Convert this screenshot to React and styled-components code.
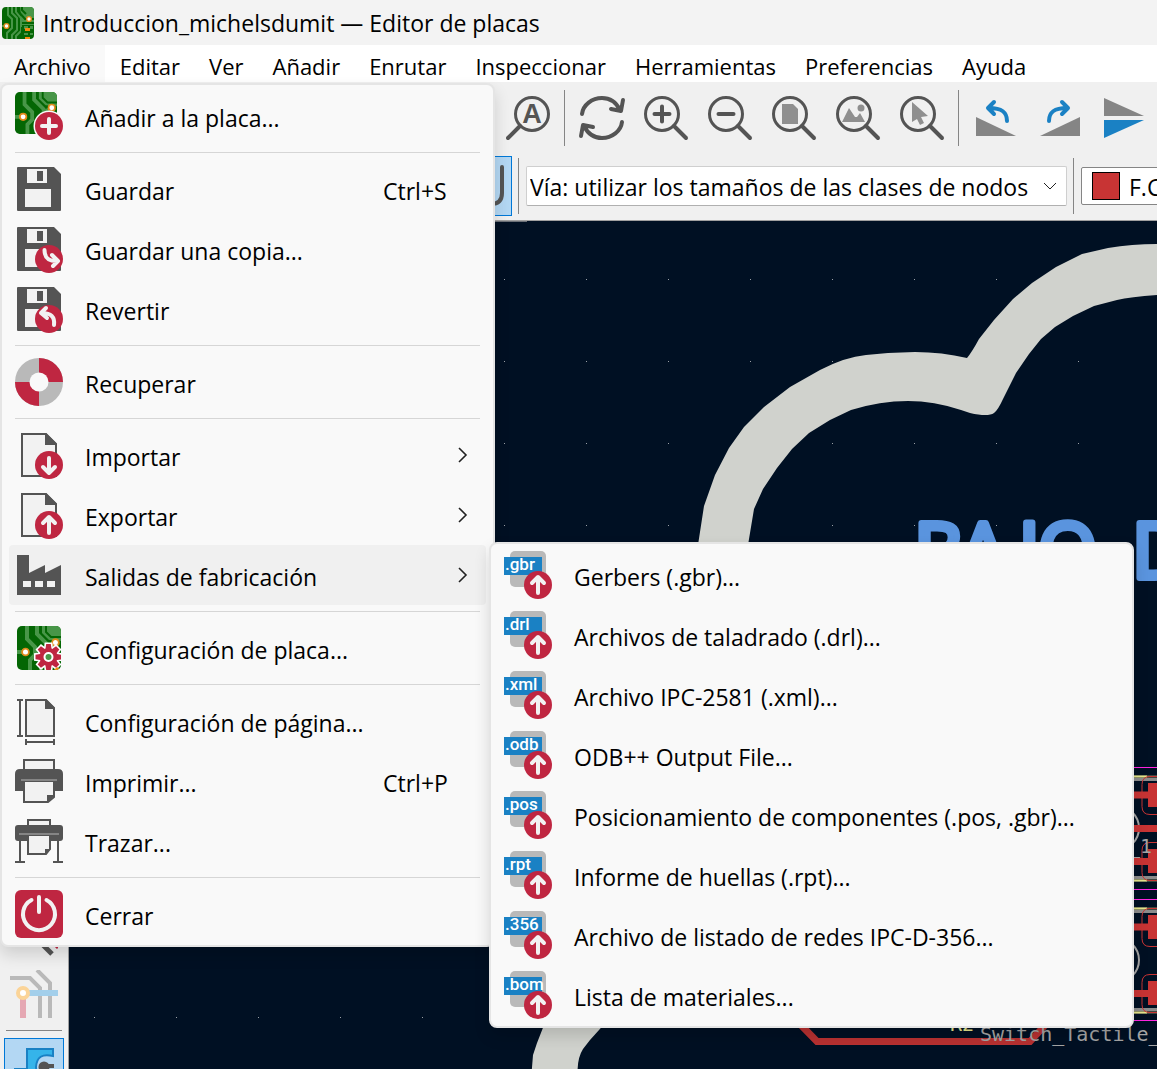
import React from "react";
import styled, { createGlobalStyle, css } from "styled-components";

const INK = "#545454";
const PAPER = "#f2f2f2";
const RED = "#bf2641";
const BLUE = "#1a81c4";
const GREY = "#b9b9b9";

const GlobalStyle = createGlobalStyle`
  *, *::before, *::after { box-sizing: border-box; }
  html, body { margin: 0; height: 100%; overflow: hidden; }
  body, button, select {
    font-family: "Open Sans", "Noto Sans", sans-serif;
    font-size: 23px;
    color: #000;
  }
`;

const Window = styled.div`
  position: relative;
  display: flex;
  flex-direction: column;
  height: 100vh;
  overflow: hidden;
  background: #f0f0f0;
`;

const TitleBar = styled.header`
  display: flex;
  align-items: center;
  gap: 9px;
  height: 45px;
  flex: none;
  padding: 0 2px;
  background: #f3f3f3;
`;

const Title = styled.h1`
  margin: 0;
  font-size: 23px;
  font-weight: 400;
  line-height: 32px;
  white-space: nowrap;
`;

const MenuBar = styled.nav`
  display: flex;
  gap: 1px;
  height: 37px;
  flex: none;
  background: #fff;
`;

const MenuBarItem = styled.button`
  border: 0;
  padding: 4px 14px 0;
  font-size: 22px;
  line-height: 32px;
  white-space: nowrap;
  background: ${(p) => (p.$open ? "#f9f9f9" : "transparent")};
`;

const ToolArea = styled.div`
  flex: none;
  padding-bottom: 2px;
  border-bottom: 1px solid #a0a0a0;
  overflow: hidden;
`;

const ToolRow = styled.div`
  display: flex;
  align-items: center;
  height: ${(p) => p.$height}px;
  padding-left: ${(p) => p.$inset}px;
`;

const ToolButton = styled.button`
  display: flex;
  align-items: center;
  justify-content: center;
  flex: none;
  width: ${(p) => p.$width || 60}px;
  height: 60px;
  padding: 0;
  border: 1px solid transparent;
  background: transparent;
  ${(p) =>
    p.$active &&
    css`
      border-color: #0078d7;
      background: #b3d7f3;
    `}
`;

const Rule = styled.span`
  flex: none;
  width: 1px;
  height: 56px;
  margin: 0 ${(p) => p.$after}px 0 ${(p) => p.$before}px;
  background: #858585;
`;

const Combo = styled.label`
  display: flex;
  align-items: center;
  flex: none;
  width: 541px;
  height: 40px;
  padding-right: 8px;
  border: 1px solid #cfcfcf;
  border-bottom-color: #b0b0b0;
  border-radius: 2px;
  background: #fff;
`;

const LayerCombo = styled(Combo)`
  width: 300px;
  height: 38px;
  padding-left: 10px;
  gap: 9px;
  border-color: #858585;
`;

const Select = styled.select`
  appearance: none;
  flex: 1;
  min-width: 0;
  height: 36px;
  padding: 2px 0 0 3px;
  border: 0;
  background: transparent;
  line-height: 32px;
`;

const LayerSelect = styled(Select)`
  padding-left: 0;
`;

const Swatch = styled.span`
  width: 28px;
  height: 28px;
  border: 1px solid #000;
  background: #c83434;
`;

const Workspace = styled.main`
  display: flex;
  flex: 1;
  min-height: 0;
`;

const SideBar = styled.aside`
  display: flex;
  flex-direction: column;
  align-items: center;
  flex: none;
  width: 69px;
  padding-top: 683px;
  border-right: 1px solid #a0a0a0;
`;

const SideRule = styled.span`
  flex: none;
  width: 56px;
  height: 1px;
  margin: 6px 0 7px;
  background: #858585;
`;

const Board = styled.svg`
  flex: 1;
  min-width: 0;
  height: 100%;
  background: #001023;
`;

const Popup = styled.div`
  position: absolute;
  left: ${(p) => p.$left}px;
  top: ${(p) => p.$top}px;
  width: ${(p) => p.$width}px;
  padding: 1px 0;
  border: 2px solid #e5e5e5;
  border-radius: 8px;
  background: #f9f9f9;
  box-shadow: 0 8px 16px rgba(0, 0, 0, 0.14);
`;

const Item = styled.button`
  display: flex;
  align-items: center;
  width: calc(100% - 14px);
  height: 60px;
  margin: 0 7px;
  padding: 0 16px 0 6px;
  border: 0;
  border-radius: 4px;
  text-align: left;
  background: ${(p) => (p.$active ? "#f0f0f0" : "transparent")};
`;

const ItemLabel = styled.span`
  flex: 1;
  padding: 3px 0 0 22px;
  line-height: 32px;
  white-space: nowrap;
`;

const Shortcut = styled.span`
  width: 87px;
  padding-top: 3px;
  line-height: 32px;
`;

const Divider = styled.hr`
  height: 1px;
  margin: 6px 13px;
  border: 0;
  background: #d6d6d6;
`;

const Glyph = styled.svg`
  flex: none;
`;

const Icon = ({ size = 48, children }) => (
  <Glyph width={size} height={size} viewBox={`0 0 ${size} ${size}`} fill="none" aria-hidden="true">
    {children}
  </Glyph>
);

const Badge = ({ children }) => (
  <g>
    <circle cx="34" cy="34" r="14" fill={RED} />
    <g stroke={PAPER} strokeWidth="4" strokeLinecap="round" strokeLinejoin="round">{children}</g>
  </g>
);

const Pad = ({ x, y }) => <circle cx={x} cy={y} r="3.4" fill="#fff" stroke="#e08a1a" strokeWidth="1.8" />;

const PcbTile = () => (
  <g>
    <clipPath id="tile"><rect width="44" height="44" rx="5" /></clipPath>
    <g clipPath="url(#tile)">
      <rect width="44" height="44" fill="#046604" />
      <path d="M25 0h19v15L32 14 25 7z" fill="#489648" />
      <path d="M10 0v13l8 8v8l-5 5v10M20 0v8l10 10v5l-6 6v15" stroke="#489648" strokeWidth="4" />
      <path d="M29 0v6l5 5h10" stroke="#046604" strokeWidth="2" />
      <path d="M32 20l6-3M0 26h9" stroke="#489648" strokeWidth="4" />
    </g>
    <Pad x="8.5" y="26" />
    <Pad x="38.5" y="16.5" />
  </g>
);

const AppLogo = () => (
  <Icon size={32}>
    <clipPath id="logo"><rect width="32" height="32" rx="4" /></clipPath>
    <g clipPath="url(#logo)">
      <rect width="32" height="32" fill="#046604" />
      <path d="M18 0h14v18H20z" fill="#489648" />
      <path d="M6 0v8l4 4v9l-5 5v6M10 0v6l5 5v12l-5 5v4M14 0v5l5 6v13l-5 5v3" stroke="#489648" strokeWidth="2" />
      <path d="M16 0v4l7 8h9M20 0v3l4 4M20 16h12M20 20v12" stroke="#046604" strokeWidth="2" />
      <path d="M0 19h6" stroke="#489648" strokeWidth="2" />
      <path d="M22 19h4v3h-4zM28 19h3v3h-3zM22 26h4v2h-4zM28 26h3v2h-3z" fill="#489648" />
      <path d="M23 21h5v3h-5zM23 30h5v2h-5z" fill="#f28a10" />
    </g>
    <circle cx="27" cy="12" r="2.4" fill="#fff" stroke="#e08a1a" strokeWidth="1.4" />
    <circle cx="4.5" cy="19" r="2.4" fill="#fff" stroke="#e08a1a" strokeWidth="1.4" />
  </Icon>
);

const Floppy = () => (
  <g>
    <path d="M3 2h36l7 7v36q0 1-1 1H3q-1 0-1-1V3q0-1 1-1z" fill={INK} />
    <path d="M12 4h20v14H12zM10 24h26v18H10z" fill={PAPER} />
    <path d="M22 6h6v10h-6z" fill={INK} />
  </g>
);

const Sheet = () => (
  <g>
    <path d="M7 3h24l10 10v32H7z" fill={PAPER} stroke={INK} strokeWidth="2" />
    <path d="M30 2h1l11 11v1H30z" fill={INK} />
  </g>
);

const gearTeeth = [0, 45, 90, 135, 180, 225, 270, 315];
const Gear = ({ grow = 0, fill }) => (
  <g transform="translate(31.5 31)" fill={fill}>
    <circle r={9 + grow} />
    {gearTeeth.map((a) => (
      <path key={a} transform={`rotate(${a})`} d={`M${-3.2 - grow} -7L${-2.3 - grow} ${-13 - grow}H${2.3 + grow}L${3.2 + grow} -7z`} />
    ))}
  </g>
);

const UpArrow = () => <path d="M34 42V27M28 32l6-6 6 6" />;

const icons = {
  add: (
    <Icon>
      <g transform="scale(.955)"><PcbTile /></g>
      <circle cx="34" cy="34" r="15.5" fill="#f9f9f9" />
      <Badge><path d="M34 27v14M27 34h14" /></Badge>
    </Icon>
  ),
  save: <Icon><Floppy /></Icon>,
  saveCopy: <Icon><Floppy /><Badge><path d="M29.5 25c0 7 3 11 12 11M37 30l6 6-5 5" /></Badge></Icon>,
  revert: <Icon><Floppy /><Badge><path d="M39 40c1-8-3-12-12-12M31 23l-5 5 6 5" /></Badge></Icon>,
  recover: (
    <Icon>
      <circle cx="24" cy="24" r="24" fill={GREY} />
      <path d="M24 0a24 24 0 0 1 24 24H0a24 24 0 0 0 24 24z" fill={RED} />
      <circle cx="24" cy="24" r="9.5" fill="#f9f9f9" />
    </Icon>
  ),
  import: <Icon><Sheet /><Badge><path d="M34 27v15M28 36l6 6 6-6" /></Badge></Icon>,
  export: <Icon><Sheet /><Badge><UpArrow /></Badge></Icon>,
  factory: (
    <Icon>
      <path d="M2 4h12v18l16-8v8l16-8v30H2z" fill={INK} />
      <path d="M8 30h8v6H8zM20 30h8v6h-8zM32 30h8v6h-8z" fill={PAPER} />
    </Icon>
  ),
  boardSetup: (
    <Icon>
      <g transform="translate(2 2)">
        <PcbTile />
        <clipPath id="gearClip"><rect width="44" height="44" rx="5" /></clipPath>
        <g clipPath="url(#gearClip)">
          <Gear grow={1.5} fill="#fff" />
          <path d="M37 44l3-3 4 3z" fill="#f28a10" />
          <Gear fill={RED} />
          <circle cx="31.5" cy="31" r="4" fill="#489648" stroke="#fff" strokeWidth="2" />
        </g>
      </g>
    </Icon>
  ),
  page: (
    <Icon>
      <path d="M11 3h20l8 8v28H11z" fill={PAPER} stroke={INK} strokeWidth="2" />
      <path d="M30 2h1l9 9v1H30z" fill={INK} />
      <path d="M2 3h6M5 3v36M2 39h6M11 42v6M11 45h28M39 42v6" stroke={INK} strokeWidth="2" />
    </Icon>
  ),
  print: (
    <Icon>
      <path d="M9 13V3h30v10" fill={PAPER} stroke={INK} strokeWidth="2" />
      <path d="M5 12h38q5 0 5 5v17H0V17q0-5 5-5z" fill={INK} />
      <path d="M9 24h30v16l-6 5H9z" fill={PAPER} stroke={INK} strokeWidth="2" />
      <path d="M6 23h36" stroke="#858585" strokeWidth="2" />
      <path d="M32 38h8l-8 8z" fill={INK} />
    </Icon>
  ),
  plot: (
    <Icon>
      <path d="M13 9V3h22v6" fill={PAPER} stroke={INK} strokeWidth="2" />
      <rect y="8" width="48" height="16" rx="3" fill={INK} />
      <path d="M13 18h22v14l-4 5H13z" fill={PAPER} stroke={INK} strokeWidth="2" />
      <path d="M4 17h40" stroke="#858585" strokeWidth="2" />
      <path d="M30 32h6l-6 6z" fill={INK} />
      <path d="M5 24v21M0 45h10M43 24v21M38 45h10" stroke={INK} strokeWidth="2" />
    </Icon>
  ),
  quit: (
    <Icon>
      <rect width="48" height="48" rx="6" fill={RED} />
      <path d="M16.5 10a16 16 0 1 0 15 0M24 7v15" stroke={PAPER} strokeWidth="4" strokeLinecap="round" />
    </Icon>
  ),
};

const FileIcon = ({ ext }) => (
  <Icon>
    <rect x="6" width="36" height="36" rx="5" fill={GREY} />
    <rect y="6" width="38" height="18" fill={BLUE} />
    <text x="1" y="19" fill="#fff" fontFamily="Roboto, sans-serif" fontWeight="500" fontSize="17">{ext}</text>
    <Badge><UpArrow /></Badge>
  </Icon>
);

const Lens = ({ children }) => (
  <Icon>
    <circle cx="20" cy="20" r="16.5" stroke={INK} strokeWidth="3" />
    <path d="M32 32l12 12" stroke={INK} strokeWidth="4" strokeLinecap="round" />
    {children}
  </Icon>
);

const TurnLeft = () => (
  <g>
    <path d="M6 23v19h40z" fill="#858585" />
    <path d="M37 27c0-9-5-13-18-13M24 8l-6 6 6 6" stroke={BLUE} strokeWidth="4" strokeLinecap="round" strokeLinejoin="round" />
  </g>
);

const CurvedArrow = () => (
  <path d="M4 20C5 11 14 4 24 4c8 0 14 4 18 12M45 6l-2 11-10-2" stroke={INK} strokeWidth="4" strokeLinecap="round" strokeLinejoin="round" />
);

const viewTools = [
  ["Refrescar", <Icon><CurvedArrow /><g transform="rotate(180 24 24)"><CurvedArrow /></g></Icon>],
  ["Acercar", <Lens><path d="M12.5 20h15M20 12.5v15" stroke={INK} strokeWidth="4" strokeLinecap="round" /></Lens>],
  ["Alejar", <Lens><path d="M12.5 20h15" stroke={INK} strokeWidth="4" strokeLinecap="round" /></Lens>],
  ["Ajustar a la página", <Lens><path d="M12 10h11l5 5v15H12z" fill="#8f8f8f" /></Lens>],
  ["Ajustar a los objetos", <Lens><path d="M8 28l7-14 6 9h2l3-4 5 9z" fill="#8f8f8f" /><circle cx="27" cy="14" r="3.5" fill="#8f8f8f" /></Lens>],
  ["Ajustar a la selección", <Lens><path d="M14 8l16 14-7 1 3 6-4 2-3-6-5 3z" fill="#8f8f8f" /></Lens>],
];

const turnTools = [
  ["Girar a la izquierda", <Icon><TurnLeft /></Icon>],
  ["Girar a la derecha", <Icon><g transform="translate(52 0) scale(-1 1)"><TurnLeft /></g></Icon>],
  ["Voltear", <Icon><path d="M6 4l40 18H6z" fill="#858585" /><path d="M6 26h40L6 44z" fill={BLUE} /></Icon>],
];

const menus = ["Archivo", "Editar", "Ver", "Añadir", "Enrutar", "Inspeccionar", "Herramientas", "Preferencias", "Ayuda"];

const fileMenu = [
  [{ icon: "add", label: "Añadir a la placa..." }],
  [
    { icon: "save", label: "Guardar", keys: "Ctrl+S" },
    { icon: "saveCopy", label: "Guardar una copia..." },
    { icon: "revert", label: "Revertir" },
  ],
  [{ icon: "recover", label: "Recuperar" }],
  [
    { icon: "import", label: "Importar", sub: true },
    { icon: "export", label: "Exportar", sub: true },
    { icon: "factory", label: "Salidas de fabricación", sub: true, active: true },
  ],
  [{ icon: "boardSetup", label: "Configuración de placa..." }],
  [
    { icon: "page", label: "Configuración de página..." },
    { icon: "print", label: "Imprimir...", keys: "Ctrl+P" },
    { icon: "plot", label: "Trazar..." },
  ],
  [{ icon: "quit", label: "Cerrar" }],
];

const outputs = [
  [".gbr", "Gerbers (.gbr)..."],
  [".drl", "Archivos de taladrado (.drl)..."],
  [".xml", "Archivo IPC-2581 (.xml)..."],
  [".odb", "ODB++ Output File..."],
  [".pos", "Posicionamiento de componentes (.pos, .gbr)..."],
  [".rpt", "Informe de huellas (.rpt)..."],
  [".356", "Archivo de listado de redes IPC-D-356..."],
  [".bom", "Lista de materiales..."],
];

const SubArrow = () => (
  <Icon size={16}><path d="M5 1l7 7-7 7" stroke="#222" strokeWidth="1.6" /></Icon>
);

const silkFont = { fontFamily: "'DejaVu Sans Mono', monospace", fontSize: 20 };

const Footprint = ({ y }) => (
  <g transform={`translate(0 ${y})`}>
    <path d="M1134 3.5h40M1134 101.5h40" stroke="#8c8c8c" strokeWidth="3" />
    <path d="M1134 .5h40M1134 104.5h40" stroke="#7d7d5c" strokeWidth="2" />
    <path d="M1134 .5h13M1134 104.5h13" stroke="#e6e68c" strokeWidth="2" />
    <path d="M1134 19h40M1134 85.5h40" stroke="#c83434" strokeWidth="7" />
    <path d="M1148 7h30v24h-30zM1148 73h30v24h-30z" fill="#c83434" />
    <path d="M1174 .5h-24q-8 0-8 8v22q0 8 8 8h24M1174 66.5h-24q-8 0-8 8v22q0 8 8 8h24" fill="none" stroke="#c83434" />
    <circle cx="1117" cy="52" r="22" fill="none" stroke="#a5a5a5" strokeWidth="2" />
  </g>
);

const BoardView = () => (
  <Board viewBox="69 221 1088 848" preserveAspectRatio="xMinYMin slice" role="img" aria-label="Placa">
    <defs>
      <pattern id="grid" x="94" y="279" width="82" height="82" patternUnits="userSpaceOnUse">
        <rect width="1" height="1" fill="#9aa0a6" />
      </pattern>
    </defs>
    <rect x="69" y="221" width="2400" height="1600" fill="url(#grid)" />
    <path d="M69 221.5h458" stroke="#6b7077" />
    <g fill="#d0d2cd">
      <path d="M698 545L704 506 715 475 729 448 744 427 764 407 790 387 820 370 Q845 357 866 355L888 353 915 352Q942 352 967 358Q972 352 979 339L994 320 1013 299 1032 283 1056 267 1082 254 1108 248Q1132 244 1157 244L1260 256V307L1157 295Q1130 297 1117 300L1094 306 1073 316 1055 327 1041 339 1029 354 1016 373 1003 399Q998 410 994 413Q988 417 970 413L961 410Q934 401 908 401Q880 401 851 410L830 420 809 433 792 449 777 468 763 489 754 509 748 545z" />
      <path d="M546 1020L537 1043 533 1055 531 1080H578Q576 1060 583 1049L590 1040 608 1020z" />
    </g>
    <text x="914 959 1019 1038 1100 1132" y="578" fill="#5a94de" stroke="#5a94de" strokeWidth="6" strokeLinejoin="round" fontFamily="'Open Sans', sans-serif" fontWeight="400" fontSize="76">BAJO D</text>
    <path d="M1134 767.5h40M1134 889.5h40M1134 899.5h40M1134 1020.5h40" stroke="#ff26e2" />
    <Footprint y={776} />
    <Footprint y={908} />
    <path d="M1134 828.5h40" stroke="#c83434" strokeWidth="7" />
    <path d="M798 1022L817 1041.5H1030L1048 1022" fill="none" stroke="#b83131" strokeWidth="7" />
    <g {...silkFont}>
      <text x="1128" y="853" fill="#a5a5a5">_1</text>
      <text x="950" y="1031" fill="#e6e68c">R2</text>
      <text x="980" y="1041" fill="#a5a5a5">Switch_Tactile_</text>
    </g>
  </Board>
);

const Tools = ({ list }) =>
  list.map(([name, icon]) => (
    <ToolButton key={name} $width={64} aria-label={name}>{icon}</ToolButton>
  ));

export default function App() {
  return (
    <Window>
      <GlobalStyle />
      <TitleBar>
        <AppLogo />
        <Title>Introduccion_michelsdumit — Editor de placas</Title>
      </TitleBar>
      <MenuBar>
        {menus.map((m, i) => (
          <MenuBarItem key={m} $open={i === 0}>{m}</MenuBarItem>
        ))}
      </MenuBar>
      <ToolArea>
        <ToolRow $height={72} $inset={498}>
          <ToolButton $width={64} aria-label="Buscar y reemplazar">
            <Icon>
              <circle cx="26" cy="20" r="16.5" stroke={INK} strokeWidth="3" />
              <path d="M14 32L2 44" stroke={INK} strokeWidth="4" strokeLinecap="round" />
              <text x="26" y="29" textAnchor="middle" fill={INK} fontFamily="'Liberation Sans', sans-serif" fontWeight="700" fontSize="27">A</text>
            </Icon>
          </ToolButton>
          <Rule $before={2} $after={5} />
          <Tools list={viewTools} />
          <Rule $before={4} $after={3} />
          <Tools list={turnTools} />
        </ToolRow>
        <ToolRow $height={64} $inset={452}>
          <ToolButton $active aria-label="Anchura automática">
            <Icon><path d="M4 5v26q0 11 11 11h18q11 0 11-11V5" stroke={INK} strokeWidth="4" strokeLinecap="round" /></Icon>
          </ToolButton>
          <Rule $before={6} $after={7} />
          <Combo>
            <Select aria-label="Tamaño de vía">
              <option>Vía: utilizar los tamaños de las clases de nodos</option>
            </Select>
            <Icon size={16}><path d="M2 5l6 6 6-6" stroke="#222" /></Icon>
          </Combo>
          <Rule $before={6} $after={7} />
          <LayerCombo>
            <Swatch />
            <LayerSelect aria-label="Capa"><option>F.Cu</option></LayerSelect>
          </LayerCombo>
        </ToolRow>
      </ToolArea>
      <Workspace>
        <SideBar>
          <ToolButton aria-label="Modo de relleno">
            <Icon><path d="M26 28l16 16" stroke={INK} strokeWidth="5" /><path d="M44 34l4 4" stroke={RED} strokeWidth="3" /></Icon>
          </ToolButton>
          <ToolButton aria-label="Contraste de capas">
            <Icon>
              <path d="M0 8h20l10 10v30M27 0l13 13v35" stroke={GREY} strokeWidth="4" />
              <path d="M13 28v20" stroke="#e5a8b3" strokeWidth="6" />
              <path d="M18 23h30" stroke="#a3cfeb" strokeWidth="6" />
              <circle cx="13" cy="23" r="5" fill="#fff" stroke="#fbd498" strokeWidth="4" />
            </Icon>
          </ToolButton>
          <SideRule />
          <ToolButton $active aria-label="Propiedades">
            <Icon>
              <path d="M17 5h26v7q-16-4-17 11 0 10 17 12v8H17z" fill="#35b4ea" stroke={BLUE} strokeWidth="2" />
              <path d="M4 25h13" stroke={BLUE} strokeWidth="2" />
              <path d="M34 22h10" stroke={INK} strokeWidth="4" />
              <circle cx="34" cy="23" r="4" fill={INK} stroke={INK} strokeWidth="3" />
            </Icon>
          </ToolButton>
        </SideBar>
        <BoardView />
      </Workspace>
      <Popup $left={0} $top={83} $width={495} role="menu" aria-label="Archivo">
        {fileMenu.map((group, g) => (
          <React.Fragment key={g}>
            {g > 0 && <Divider />}
            {group.map((it) => (
              <Item key={it.label} role="menuitem" $active={it.active}>
                {icons[it.icon]}
                <ItemLabel>{it.label}</ItemLabel>
                {it.keys && <Shortcut>{it.keys}</Shortcut>}
                {it.sub && <SubArrow />}
              </Item>
            ))}
          </React.Fragment>
        ))}
      </Popup>
      <Popup $left={489} $top={542} $width={645} role="menu" aria-label="Salidas de fabricación">
        {outputs.map(([ext, label]) => (
          <Item key={ext} role="menuitem">
            <FileIcon ext={ext} />
            <ItemLabel>{label}</ItemLabel>
          </Item>
        ))}
      </Popup>
    </Window>
  );
}
